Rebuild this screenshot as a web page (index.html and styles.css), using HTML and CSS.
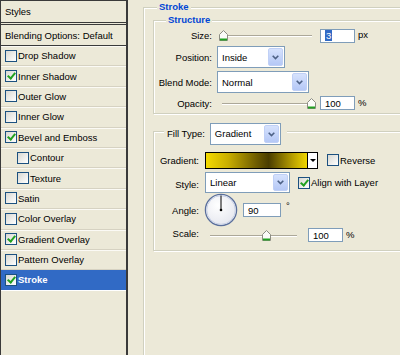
FILE: index.html
```html
<!DOCTYPE html>
<html lang="en">
<head>
    <meta charset="UTF-8">
    <title>Layer Style - Stroke</title>
    <link rel="stylesheet" href="styles.css">
</head>
<body>
    <div class="dialog">
        <!-- left: list of effects -->
        <div class="styles-list">
            <div class="list-head">Styles</div>
            <div class="list-head blend">Blending Options: Default</div>
            <div class="item"><span class="check"></span>Drop Shadow</div>
            <div class="item"><span class="check on"></span>Inner Shadow</div>
            <div class="item"><span class="check"></span>Outer Glow</div>
            <div class="item"><span class="check"></span>Inner Glow</div>
            <div class="item"><span class="check on"></span>Bevel and Emboss</div>
            <div class="item sub"><span class="check"></span>Contour</div>
            <div class="item sub"><span class="check"></span>Texture</div>
            <div class="item"><span class="check"></span>Satin</div>
            <div class="item"><span class="check"></span>Color Overlay</div>
            <div class="item"><span class="check on"></span>Gradient Overlay</div>
            <div class="item"><span class="check"></span>Pattern Overlay</div>
            <div class="item active"><span class="check on"></span>Stroke</div>
        </div>

        <!-- right: stroke options -->
        <div class="panel">
            <fieldset class="group outer">
                <legend>Stroke</legend>

                <fieldset class="group structure">
                    <legend>Structure</legend>
                    <div class="form structure-form">
                        <span class="label">Size:</span>
                        <div class="field">
                            <div class="slider">
                                <svg class="thumb" style="margin-left:0px" width="9" height="11" viewBox="0 0 9 11"><path d="M4.5 0.5 L8.5 4.5 V10.5 H0.5 V4.5 Z" fill="#fbfbf8" stroke="#8c8c82"/><path d="M1 9.5 H8" stroke="#21a121" stroke-width="2"/></svg>
                            </div>
                            <div class="num"><span class="sel">3</span></div>
                            <span class="unit">px</span>
                        </div>

                        <span class="label">Position:</span>
                        <div class="field">
                            <div class="select w-pos">
                                <span class="value">Inside</span>
                                <span class="btn"><svg width="7" height="5" viewBox="0 0 7 5"><path d="M0.7 0.8 L3.5 3.6 L6.3 0.8" fill="none" stroke="#4d6185" stroke-width="1.6"/></svg></span>
                            </div>
                        </div>

                        <span class="label">Blend Mode:</span>
                        <div class="field">
                            <div class="select w-blend">
                                <span class="value">Normal</span>
                                <span class="btn"><svg width="7" height="5" viewBox="0 0 7 5"><path d="M0.7 0.8 L3.5 3.6 L6.3 0.8" fill="none" stroke="#4d6185" stroke-width="1.6"/></svg></span>
                            </div>
                        </div>

                        <span class="label">Opacity:</span>
                        <div class="field">
                            <div class="slider">
                                <svg class="thumb" style="margin-left:88px" width="9" height="11" viewBox="0 0 9 11"><path d="M4.5 0.5 L8.5 4.5 V10.5 H0.5 V4.5 Z" fill="#fbfbf8" stroke="#8c8c82"/><path d="M1 9.5 H8" stroke="#21a121" stroke-width="2"/></svg>
                            </div>
                            <div class="num">100</div>
                            <span class="unit">%</span>
                        </div>
                    </div>
                </fieldset>

                <fieldset class="group fill">
                    <legend class="fill-legend">
                        <span>Fill Type:</span>
                        <div class="select w-fill">
                            <span class="value">Gradient</span>
                            <span class="btn"><svg width="7" height="5" viewBox="0 0 7 5"><path d="M0.7 0.8 L3.5 3.6 L6.3 0.8" fill="none" stroke="#4d6185" stroke-width="1.6"/></svg></span>
                        </div>
                    </legend>
                    <div class="form fill-form">
                        <span class="label">Gradient:</span>
                        <div class="field">
                            <div class="grad">
                                <span class="grad-bar"></span>
                                <span class="grad-arrow"></span>
                            </div>
                            <span class="check"></span>
                            <span class="check-text">Reverse</span>
                        </div>

                        <span class="label">Style:</span>
                        <div class="field">
                            <div class="select w-style">
                                <span class="value">Linear</span>
                                <span class="btn"><svg width="7" height="5" viewBox="0 0 7 5"><path d="M0.7 0.8 L3.5 3.6 L6.3 0.8" fill="none" stroke="#4d6185" stroke-width="1.6"/></svg></span>
                            </div>
                            <span class="check on"></span>
                            <span class="check-text">Align with Layer</span>
                        </div>

                        <span class="label">Angle:</span>
                        <div class="field">
                            <svg class="dial" width="34" height="34" viewBox="0 0 34 34">
                                <defs>
                                    <radialGradient id="dialFill" cx="40%" cy="35%" r="70%">
                                        <stop offset="0" stop-color="#ffffff"/>
                                        <stop offset="1" stop-color="#e4e6ee"/>
                                    </radialGradient>
                                </defs>
                                <circle cx="17" cy="17" r="15.6" fill="url(#dialFill)" stroke="#5a6f9c" stroke-width="1.3"/>
                                <circle cx="17" cy="17" r="14.3" fill="none" stroke="#c9d2e6" stroke-width="1"/>
                                <path d="M17 17 V2.5" stroke="#000" stroke-width="1"/>
                                <circle cx="17" cy="17" r="1.3" fill="#000"/>
                            </svg>
                            <div class="num w-angle">90</div>
                            <span class="deg">°</span>
                        </div>

                        <span class="label">Scale:</span>
                        <div class="field">
                            <div class="slider scale">
                                <svg class="thumb" style="margin-left:55px" width="9" height="11" viewBox="0 0 9 11"><path d="M4.5 0.5 L8.5 4.5 V10.5 H0.5 V4.5 Z" fill="#fbfbf8" stroke="#8c8c82"/><path d="M1 9.5 H8" stroke="#21a121" stroke-width="2"/></svg>
                            </div>
                            <div class="num">100</div>
                            <span class="unit">%</span>
                        </div>
                    </div>
                </fieldset>
            </fieldset>
        </div>
    </div>
</body>
</html>
```

FILE: styles.css
```css
*{margin: 0;padding: 0;}
body {
    background: #ece9d8;
    font: 9.5px "Liberation Sans", Arial, sans-serif;
    color: #000;
    overflow: hidden;
}
.dialog {
    display: flex;
    width: 400px;
    height: 355px;
    overflow: hidden;
}

/* left list */
.styles-list {
    width: 128px;
    flex: none;
    box-sizing: border-box;
    border-left: 1px solid #3a3a3a;
    border-top: 1px solid #3a3a3a;
    border-right: 2px solid #3a3a3a;
}
.list-head {
    height: 21px;
    display: flex;
    align-items: center;
    padding-left: 4px;
    border-bottom: 1px solid #3a3a3a;
}
.list-head.blend {
    height: 20px;
    margin-top: 1px;
    border-top: 1px solid #3a3a3a;
}
.item {
    height: 20.4px;
    box-sizing: border-box;
    display: flex;
    align-items: center;
    padding-left: 4px;
    border-bottom: 1px solid #d6d2c2;
    box-shadow: inset 0 1px 0 #fbfaf5;
}
.item .check {
    margin-right: 1px;
}
.item.sub {
    padding-left: 16px;
}
.item.active {
    background: #316ac5;
    color: #fff;
    font-weight: bold;
    box-shadow: none;
    border-bottom-color: #fff;
}

/* checkbox */
.check {
    width: 12px;
    height: 12px;
    box-sizing: border-box;
    border: 1px solid #1c5180;
    background: linear-gradient(135deg, #d8d8d2, #fff);
    display: flex;
    align-items: center;
    justify-content: center;
    flex: none;
}
.check.on::after {
    content: "";
    width: 3px;
    height: 6px;
    border: solid #21a121;
    border-width: 0 2px 2px 0;
    transform: translate(0, -1px) rotate(40deg);
}
.check-text {
    margin-left: 1px;
}

/* right panel */
.panel {
    flex: 1;
    min-width: 0;
    padding-left: 15px;
    overflow: hidden;
}
.group {
    border: 1px solid #d0d0bf;
    box-shadow: inset 1px 1px 0 #fff, 1px 1px 0 #fff;
    min-width: 0;
}
.group > legend {
    background: #ece9d8;
    color: #0046d5;
    font-weight: bold;
    line-height: 12px;
    padding: 0 2px;
}
.outer {
    width: 320px;
    height: 400px;
    margin-top: 1px;
    padding: 0 0 0 9px;
}
.outer > legend {
    margin-left: 4px;
}
.structure {
    width: 300px;
    margin-top: 1px;
    padding: 2px 0 3px 2px;
}
.structure > legend {
    margin-left: 10px;
}
.fill {
    width: 300px;
    margin-top: 9px;
    padding: 13px 0 8px 2px;
}
.group > .fill-legend {
    display: flex;
    align-items: flex-start;
    height: 16px;
    margin-left: 8px;
    padding: 0 6px 0 3px;
    color: #000;
    font-weight: normal;
}
.fill-legend > span {
    line-height: 22px;
    margin-right: 5px;
}

/* label / control grids */
.form {
    display: grid;
}
.structure-form {
    grid-template-columns: 56px auto;
    grid-template-rows: 15px 22px 22px 14px;
    column-gap: 5px;
    row-gap: 3px;
}
.fill-form {
    grid-template-columns: 43px auto;
    grid-template-rows: 16px 25px 34px 15px;
    column-gap: 6px;
}
.label {
    text-align: right;
    align-self: center;
}
.fill-form .label:nth-of-type(2),
.fill-form .label:nth-of-type(4) {
    align-self: end;
    padding-bottom: 3px;
}
.field {
    display: flex;
    align-items: center;
}
.fill-form .field:nth-of-type(2),
.fill-form .field:nth-of-type(4) {
    align-self: end;
}

/* slider */
.slider {
    width: 96px;
    height: 11px;
    margin: 0 5px 0 2px;
    display: flex;
    background: linear-gradient(to bottom, transparent 5px, #aca899 5px, #aca899 6px, #fff 6px, #fff 7px, transparent 7px) no-repeat 3px 0 / calc(100% - 6px) 100%;
}
.slider.scale {
    width: 93px;
    margin: 0 8px 0 2px;
}
.thumb {
    flex: none;
}

/* number box */
.num {
    width: 35px;
    height: 14px;
    box-sizing: border-box;
    border: 1px solid #7f9db9;
    background: #fff;
    padding-left: 4px;
    display: flex;
    align-items: center;
}
.num .sel {
    background: #316ac5;
    color: #fff;
    padding: 0 1px;
}
.num.w-angle {
    width: 38px;
    margin-left: 5px;
}
.unit {
    margin-left: 3px;
    margin-bottom: 2px;
}
.deg {
    margin-left: 5px;
    margin-bottom: 9px;
}

/* dropdown */
.select {
    height: 22px;
    box-sizing: border-box;
    border: 1px solid #7f9db9;
    background: #fff;
    padding: 1px;
    display: flex;
    align-items: center;
}
.select .value {
    flex: 1;
    padding-left: 3px;
}
.select .btn {
    width: 15px;
    align-self: stretch;
    box-sizing: border-box;
    border: 1px solid #c0d0f6;
    border-radius: 2px;
    background: linear-gradient(to bottom, #d6e2fd, #b5c8f6);
    display: flex;
    align-items: center;
    justify-content: center;
}
.w-pos { width: 68px; }
.w-blend { width: 92px; }
.w-fill { width: 71px; margin-bottom: -6px; }
.w-style { width: 85px; height: 21px; margin-right: 8px; }

/* gradient picker */
.grad {
    width: 113px;
    height: 17px;
    box-sizing: border-box;
    border: 1px solid #000;
    display: flex;
    margin-right: 9px;
}
.grad-bar {
    flex: 1;
    background: linear-gradient(to right, #f4da00 0%, #c9ae00 22%, #6e5c00 50%, #4a3d00 62%, #b9a000 86%, #f0d600 100%);
}
.grad-arrow {
    width: 9px;
    border-left: 1px solid #000;
    background: #fff;
    display: flex;
    align-items: center;
    justify-content: center;
}
.grad-arrow::after {
    content: "";
    border: 3px solid transparent;
    border-top: 3px solid #000;
    margin-top: 3px;
}
.dial {
    flex: none;
    margin-left: -1px;
}
```
